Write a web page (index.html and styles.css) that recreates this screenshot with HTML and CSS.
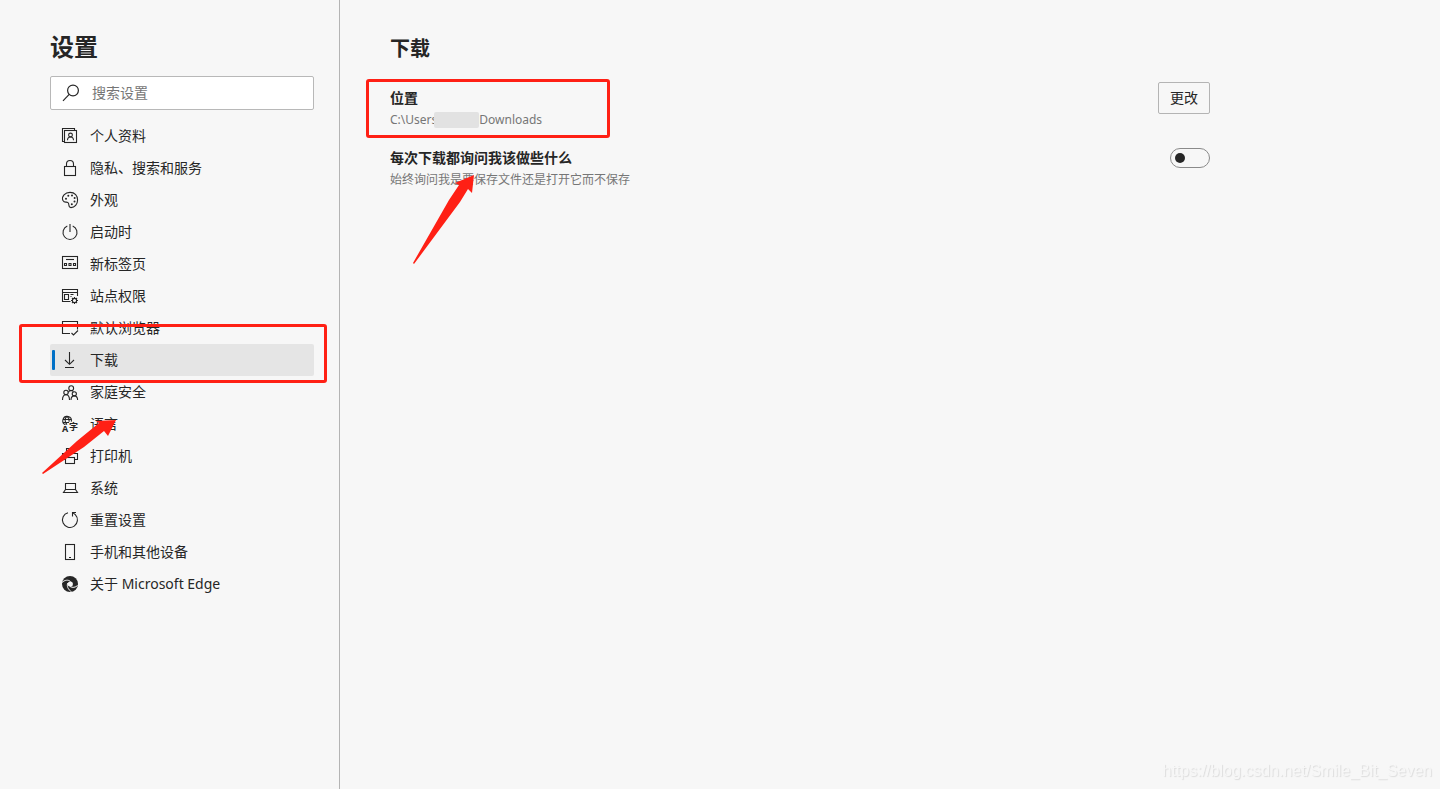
FILE: index.html
```html
<!DOCTYPE html>
<html lang="zh-CN">
  <head>
    <meta charset="UTF-8" />
    <meta name="viewport" content="width=device-width, initial-scale=1.0" />
    <title>设置</title>
    <link rel="stylesheet" href="styles.css">
  </head>
  <body>
    <div class="page">
      <aside class="sidebar">
        <h1>设置</h1>
        <label class="search">
          <svg class="search-icon" viewBox="0 0 18 18">
            <circle cx="11" cy="6.5" r="5.4" />
            <path d="M7.2 10.4L1 16.8" />
          </svg>
          <input type="text" placeholder="搜索设置" aria-label="搜索设置" />
        </label>
        <nav>
          <ul class="menu">
            <li>
              <a href="#profiles">
                <svg class="icon" viewBox="0 0 16 16">
                  <path d="M2.5 13.5h-2v-13h12v2" />
                  <rect x="2.5" y="2.5" width="12" height="12" />
                  <circle cx="8.5" cy="7" r="1.9" />
                  <path d="M5.5 12.3c0-4.4 6-4.4 6 0" />
                </svg>
                个人资料
              </a>
            </li>
            <li>
              <a href="#privacy">
                <svg class="icon" viewBox="0 0 16 16">
                  <rect x="2.5" y="6.5" width="11" height="9" />
                  <path d="M4.5 6.5V4a3.5 3.5 0 0 1 7 0v2.5" />
                </svg>
                隐私、搜索和服务
              </a>
            </li>
            <li>
              <a href="#appearance">
                <svg class="icon" viewBox="0 0 16 16">
                  <path d="M.8 8.2C-.6 4.5 3 .4 8 .4s7.6 3.6 7.6 7.6-3 7.6-6.6 7.6c-3.4 0-1.200-3.600-3-5S2.600 11.500.8 8.200z" />
                  <g class="solid">
                    <circle cx="4" cy="6.8" r="1" />
                    <circle cx="6.3" cy="3.8" r="1" />
                    <circle cx="10" cy="3.5" r="1" />
                    <circle cx="12.6" cy="6" r="1" />
                    <circle cx="12.5" cy="9.4" r="1" />
                    <circle cx="9.8" cy="12.3" r="1" />
                  </g>
                </svg>
                外观
              </a>
            </li>
            <li>
              <a href="#startup">
                <svg class="icon" viewBox="0 0 16 16">
                  <path d="M8 0v8" />
                  <path d="M5.3 2a7 7 0 1 0 5.4 0" />
                </svg>
                启动时
              </a>
            </li>
            <li>
              <a href="#newtab">
                <svg class="icon" viewBox="0 0 16 16">
                  <rect x=".5" y=".5" width="15" height="12" />
                  <path d="M4 3.5h8" />
                  <path d="M2.5 7.5h2v2h-2zM7 7.5h2v2H7zM11.5 7.5h2v2h-2z" />
                </svg>
                新标签页
              </a>
            </li>
            <li>
              <a href="#permissions">
                <svg class="icon" viewBox="0 0 16 16">
                  <path d="M8.5 13.5h-8v-12h15V8M.5 4.5h15" />
                  <path d="M2.5 6.5h4v5h-4zM8.5 6.5h3M8.5 8.5h1" />
                  <circle cx="12.5" cy="12.5" r="2.1" />
                  <path d="M12.5 9v1.5M12.5 14.5V16M9 12.5h1.5M14.5 12.5H16M10 10l1.1 1.1M13.9 13.9L15 15M15 10l-1.1 1.1M11.1 13.9L10 15" />
                </svg>
                站点权限
              </a>
            </li>
            <li>
              <a href="#default">
                <svg class="icon" viewBox="0 0 16 16">
                  <path d="M8 13.5H.5v-12h15v8" />
                  <path d="M9.5 13l2 2 4.500-4.500" />
                </svg>
                默认浏览器
              </a>
            </li>
            <li class="active">
              <a href="#downloads" aria-current="page">
                <svg class="icon" viewBox="0 0 16 16">
                  <path d="M7.5 0v12M3 8l4.5 4.3L12 8M3 15.500h9" />
                </svg>
                下载
              </a>
              <span class="mark mark-menu"></span>
            </li>
            <li>
              <a href="#family">
                <svg class="icon" viewBox="0 0 16 16">
                  <circle cx="9.2" cy="4.2" r="2.4" />
                  <circle cx="4" cy="8.4" r="2.2" />
                  <circle cx="12.3" cy="9.8" r="2.1" />
                  <path d="M.5 16c0-7 7-7 7 0M9 16c0-5.5 6.6-5.5 6.6 0M6.3 8.500c.3-1.200 1.400-2 2.900-2 1 0 1.800.5 2.200 1.300" />
                </svg>
                家庭安全
              </a>
            </li>
            <li>
              <a href="#languages">
                <svg class="icon" viewBox="0 0 16 16">
                  <path d="M3.5 8.7A4.300 4.300 0 1 1 9.300 5.600M1 3.500h8.300M1 6.500h6" />
                  <path d="M5 .3c-2.500 2-2.500 6 0 8.400M5 .3c2 1.500 2.300 3.500 2.100 5.500" />
                  <text class="glyph" x="0" y="16">A</text>
                  <text class="glyph" x="7" y="14">字</text>
                </svg>
                语言
              </a>
              <svg class="arrow arrow-menu" viewBox="0 0 76 55">
                <path d="M0 53L35 21 57 3l-3-2L74 0 66 16l-4-5L42 27 1 54z" />
              </svg>
            </li>
            <li>
              <a href="#printers">
                <svg class="icon" viewBox="0 0 16 16">
                  <path d="M3.5 11.5h-3v-6h15v6h-3M4.5 5.5v-5h7v5" />
                  <rect x="3.5" y="9.5" width="9" height="6" />
                </svg>
                打印机
              </a>
            </li>
            <li>
              <a href="#system">
                <svg class="icon" viewBox="0 0 16 16">
                  <path d="M3.5 3.5h10v6h-10zM3.5 9.5l-2 3h14l-2-3" />
                </svg>
                系统
              </a>
            </li>
            <li>
              <a href="#reset">
                <svg class="icon" viewBox="0 0 16 16">
                  <path d="M6 .7a7.5 7.5 0 1 0 7.300 2L11 .8" />
                  <path d="M10.5 4.5V.5H14" />
                </svg>
                重置设置
              </a>
            </li>
            <li>
              <a href="#phone">
                <svg class="icon" viewBox="0 0 16 16">
                  <rect x="3.5" y=".5" width="9" height="15" />
                  <path d="M7 13.5h2" />
                </svg>
                手机和其他设备
              </a>
            </li>
            <li>
              <a href="#about">
                <svg class="icon" viewBox="0 0 16 16">
                  <circle class="solid" cx="8" cy="8" r="8" />
                  <path class="swirl" d="M0 6.5C2.5 3.8 6.5 3.5 8.5 5.5M5.800 7C4.500 10 6 13.500 9.500 15.800M8 10.500c2.500 1.500 5.500 1 7.500-1" />
                  <circle class="swirl-dot" cx="8.3" cy="8" r="2.6" />
                </svg>
                关于 Microsoft Edge
              </a>
            </li>
          </ul>
        </nav>
      </aside>
      <main class="content">
        <h2>下载</h2>
        <section class="setting">
          <div class="setting-text">
            <h3>位置</h3>
            <p class="path">C:\Users<span class="redacted"></span>Downloads</p>
          </div>
          <div class="setting-control">
            <button type="button">更改</button>
          </div>
          <span class="mark mark-location"></span>
        </section>
        <section class="setting">
          <div class="setting-text">
            <h3><label for="ask">每次下载都询问我该做些什么</label></h3>
            <p>始终询问我是要保存文件还是打开它而不保存</p>
          </div>
          <div class="setting-control">
            <input class="toggle" type="checkbox" id="ask" />
          </div>
          <svg class="arrow arrow-ask" viewBox="0 0 62 90">
            <path d="M0 88L36 25 46 10l-4-2L61 0 59 18l-4-4L47 27 1 89z" />
          </svg>
        </section>
      </main>
    </div>
    <div class="watermark">https://blog.csdn.net/Smile_Bit_Seven</div>
  </body>
</html>
```

FILE: styles.css
```css
* {
  box-sizing: border-box;
}

body {
  margin: 0;
  background: #f7f7f7;
  color: #262626;
  font-family: "Noto Sans", "Noto Sans CJK SC", sans-serif;
  font-size: 14px;
  line-height: 20px;
}

h1,
h2,
h3,
p {
  margin: 0;
}

.page {
  display: flex;
  min-height: 100vh;
}

/* Sidebar */
.sidebar {
  flex: 0 0 340px;
  padding: 30px 25px 30px 50px;
  border-right: 1px solid #b4b4b4;
}

h1 {
  font-size: 24px;
  line-height: 34px;
  margin-bottom: 12px;
}

.search {
  display: flex;
  align-items: center;
  gap: 12px;
  height: 34px;
  margin-bottom: 10px;
  padding: 0 11px;
  background: #fff;
  border: 1px solid #b8b8b8;
  border-radius: 2px;
}

.search-icon {
  width: 18px;
  height: 18px;
  fill: none;
  stroke: #262626;
  stroke-width: 1.2;
}

.search input {
  flex: 1;
  min-width: 0;
  padding: 0;
  border: none;
  outline: none;
  background: transparent;
  color: #262626;
  font: inherit;
}

.search input::placeholder {
  color: #767676;
}

.menu {
  list-style: none;
  margin: 0;
  padding: 0;
}

.menu li {
  position: relative;
}

.menu a {
  display: flex;
  align-items: center;
  gap: 12px;
  height: 32px;
  padding: 0 12px;
  border-radius: 2px;
  color: #262626;
  text-decoration: none;
}

.menu a:hover {
  background: #eeeeee;
}

.menu .active a {
  background: #e5e5e5;
}

.menu .active::before {
  content: "";
  position: absolute;
  top: 6px;
  left: 2px;
  width: 3px;
  height: 20px;
  border-radius: 1px;
  background: #0070c6;
}

.icon {
  flex: none;
  width: 16px;
  height: 16px;
  overflow: visible;
  fill: none;
  stroke: #262626;
  stroke-width: 1.1;
}

.icon .solid {
  fill: #262626;
  stroke: none;
}

.icon .swirl {
  stroke: #f7f7f7;
  stroke-width: 1;
}

.icon .swirl-dot {
  fill: #f7f7f7;
  stroke: none;
}

.icon .glyph {
  fill: #262626;
  stroke: none;
  font-size: 9px;
  font-weight: bold;
}

/* Content */
.content {
  flex: 1;
  max-width: 920px;
  padding: 34px 50px;
}

h2 {
  font-size: 20px;
  line-height: 30px;
  margin-bottom: 18px;
}

.setting {
  position: relative;
  display: flex;
  justify-content: space-between;
  min-height: 60px;
}

.setting-text {
  padding-top: 6px;
}

h3 {
  font-size: 14px;
  line-height: 20px;
}

.setting-text p {
  color: #767676;
  font-size: 12px;
  line-height: 24px;
}

.path {
  display: flex;
  align-items: center;
}

/* Covers the end of the user folder name */
.redacted {
  width: 45px;
  height: 16px;
  margin-left: -3px;
  border-radius: 2px;
  background: #e2e2e2;
}

.setting-control {
  display: flex;
  align-items: center;
  height: 32px;
}

button {
  height: 32px;
  padding: 0 11px;
  background: transparent;
  border: 1px solid #b4b4b4;
  border-radius: 2px;
  color: #262626;
  font: inherit;
}

.toggle {
  appearance: none;
  display: flex;
  align-items: center;
  width: 40px;
  height: 20px;
  margin: 0;
  padding: 0 4px;
  border: 1px solid #8a8a8a;
  border-radius: 10px;
}

.toggle::before {
  content: "";
  width: 10px;
  height: 10px;
  border-radius: 50%;
  background: #262626;
}

.toggle:checked {
  justify-content: flex-end;
}

/* Red marks drawn over the page */
.mark {
  position: absolute;
  z-index: 1;
  border: 3px solid #ff2015;
  border-radius: 3px;
  pointer-events: none;
}

.mark-menu {
  top: -20px;
  right: -13px;
  bottom: -7px;
  left: -31px;
}

.mark-location {
  top: -3px;
  left: -24px;
  width: 244px;
  height: 59px;
}

.arrow {
  position: absolute;
  z-index: 1;
  fill: #ff2015;
  pointer-events: none;
}

.arrow-menu {
  top: 12px;
  left: -8px;
  width: 76px;
  height: 55px;
}

.arrow-ask {
  top: 33px;
  left: 23px;
  width: 62px;
  height: 90px;
}

.watermark {
  position: fixed;
  right: 8px;
  bottom: 8px;
  color: #f7f7f7;
  font-family: "Liberation Sans", Arial, sans-serif;
  font-size: 16px;
  text-shadow: 1px 1px 1px #dcdcdc;
}
```
